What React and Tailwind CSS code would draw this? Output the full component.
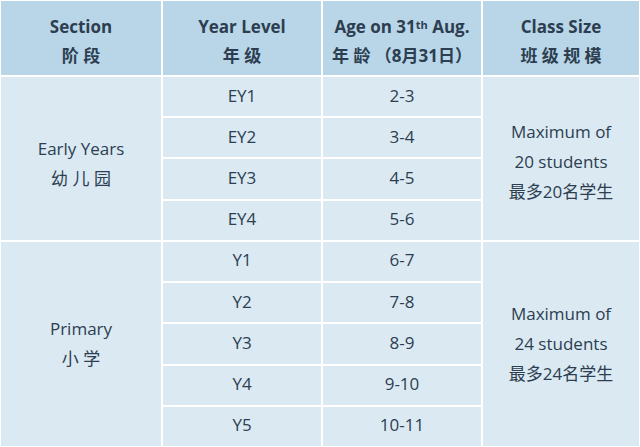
import React from "react";

const font = { fontFamily: '"Open Sans", "Noto Sans CJK SC", sans-serif' };

function H({ children }) {
  return (
    <div className="bg-[#b9d5e8] flex flex-col items-center justify-center pt-[6px] text-[17px] leading-[29px] font-bold text-[#2c3e50]">
      {children}
    </div>
  );
}

function C({ children, className = "" }) {
  return (
    <div className={"bg-[#dbe9f3] flex flex-col items-center justify-center text-[17px] leading-[30px] text-[#2c3e50] " + className}>
      {children}
    </div>
  );
}

export default function App() {
  const ey = [["EY1", "2-3"], ["EY2", "3-4"], ["EY3", "4-5"], ["EY4", "5-6"]];
  const y = [["Y1", "6-7"], ["Y2", "7-8"], ["Y3", "8-9"], ["Y4", "9-10"], ["Y5", "10-11"]];
  return (
    <div style={font} className="w-[640px] h-[447px] bg-white p-[1px] grid grid-cols-[160px_158px_158px_156px] grid-rows-[74px_repeat(9,1fr)] gap-[2px]">
      <H>
        <span>Section</span>
        <span>阶 段</span>
      </H>
      <H>
        <span>Year Level</span>
        <span>年 级</span>
      </H>
      <H>
        <span>
          Age on 31<span className="text-[11px] leading-none align-[4px] font-bold">th</span> Aug.
        </span>
        <span>年 龄 （8月31日）</span>
      </H>
      <H>
        <span>Class Size</span>
        <span>班 级 规 模</span>
      </H>

      <C className="row-span-4 pt-[12px]">
        <span>Early Years</span>
        <span>幼 儿 园</span>
      </C>
      <C className="pb-[2px]">{ey[0][0]}</C>
      <C className="pb-[2px]">{ey[0][1]}</C>
      <C className="row-span-4 pt-[8px]">
        <span>Maximum of</span>
        <span>20 students</span>
        <span>最多20名学生</span>
      </C>
      {ey.slice(1).map(([a, b]) => (
        <React.Fragment key={a}>
          <C className="pb-[2px]">{a}</C>
          <C className="pb-[2px]">{b}</C>
        </React.Fragment>
      ))}

      <C className="row-span-5">
        <span>Primary</span>
        <span>小 学</span>
      </C>
      <C className="pb-[2px]">{y[0][0]}</C>
      <C className="pb-[2px]">{y[0][1]}</C>
      <C className="row-span-5">
        <span>Maximum of</span>
        <span>24 students</span>
        <span>最多24名学生</span>
      </C>
      {y.slice(1).map(([a, b]) => (
        <React.Fragment key={a}>
          <C className="pb-[2px]">{a}</C>
          <C className="pb-[2px]">{b}</C>
        </React.Fragment>
      ))}
    </div>
  );
}
